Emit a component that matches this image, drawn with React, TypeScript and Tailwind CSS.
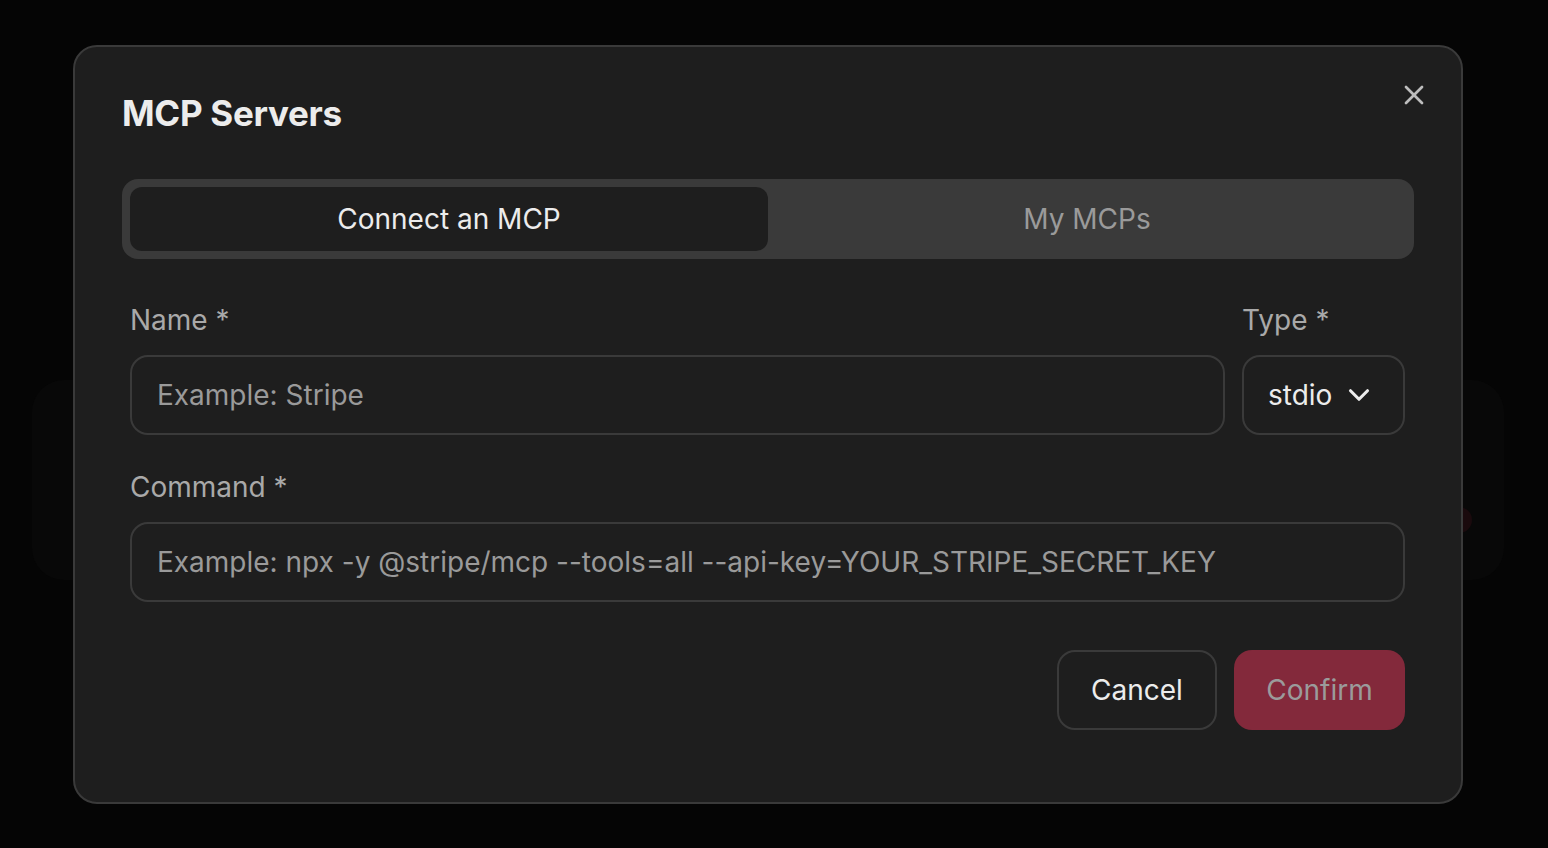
import React from 'react';
import { X, ChevronDown } from 'lucide-react';

const font = { fontFamily: 'Inter, "Noto Sans", sans-serif' };

const Field: React.FC<{ label: string; children: React.ReactNode; className?: string }> = ({ label, children, className }) => (
  <div className={className}>
    <label className="block text-[28px] leading-[28px] text-[#a9a9a9]">{label}</label>
    <div className="mt-[21px]">{children}</div>
  </div>
);

const McpServersDialog: React.FC = () => {
  return (
    <div className="absolute left-[73px] top-[45px] w-[1390px] h-[759px] rounded-[24px] border-2 border-[#3a3a3a] bg-[#1e1e1e] px-[47px]">
      <button className="absolute right-[31px] top-[32px] text-[#bdbdbd]">
        <X size={32} strokeWidth={2} />
      </button>

      <h2 className="mt-[48px] text-[35px] leading-[36px] font-bold text-[#ececec] tracking-[-0.3px]">MCP Servers</h2>

      <div className="mt-[48px] h-[80px] rounded-[16px] bg-[#3a3a3a] p-[8px] flex">
        <div className="flex-1 rounded-[12px] bg-[#1e1e1e] flex items-center justify-center text-[28px] text-[#ececec]">
          Connect an MCP
        </div>
        <div className="flex-1 flex items-center justify-center text-[28px] text-[#9a9a9a]">
          My MCPs
        </div>
      </div>

      <div className="px-[8px] pr-[9px]">
        <div className="mt-[47px] flex gap-[17px]">
          <Field label="Name *" className="flex-1">
            <div className="h-[80px] rounded-[18px] border-2 border-[#3a3a3a] flex items-center px-[25px] text-[28px] text-[#9a9a9a]">
              Example: Stripe
            </div>
          </Field>
          <Field label="Type *" className="w-[163px]">
            <div className="h-[80px] rounded-[18px] border-2 border-[#3a3a3a] flex items-center px-[24px] gap-[10px] text-[28px] text-[#ececec]">
              stdio
              <ChevronDown size={34} strokeWidth={2.2} />
            </div>
          </Field>
        </div>

        <Field label="Command *" className="mt-[38px]">
          <div className="h-[80px] rounded-[18px] border-2 border-[#3a3a3a] flex items-center px-[25px] text-[28px] text-[#9a9a9a] whitespace-nowrap">
            Example: npx -y @stripe/mcp --tools=all --api-key=YOUR_STRIPE_SECRET_KEY
          </div>
        </Field>

        <div className="mt-[48px] flex justify-end gap-[17px]">
          <button className="h-[80px] w-[160px] rounded-[18px] border-2 border-[#3a3a3a] text-[28px] text-[#ececec]">
            Cancel
          </button>
          <button className="h-[80px] w-[171px] rounded-[18px] bg-[#83293b] text-[28px] text-[#9b9b9b]">
            Confirm
          </button>
        </div>
      </div>
    </div>
  );
};

export default function App() {
  return (
    <div style={font} className="relative w-full h-[848px] bg-[#050505] overflow-hidden">
      <div className="pt-[380px] px-[32px]">
        <div className="h-[200px] w-[1472px] rounded-[32px] bg-[#080808] flex items-center justify-end pr-[32px]">
          <div className="w-[26px] h-[26px] mt-[80px] rounded-full bg-[#1a0a0d]" />
        </div>
      </div>
      <McpServersDialog />
    </div>
  );
}
